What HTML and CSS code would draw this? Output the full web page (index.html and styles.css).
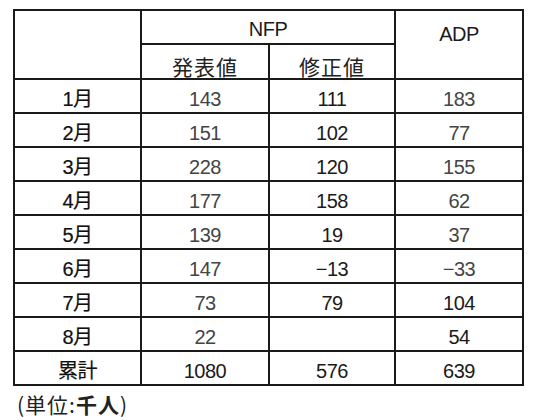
FILE: index.html
```html
<!DOCTYPE html>
<html lang="ja">
<head>
<meta charset="utf-8">
<link rel="stylesheet" href="styles.css">
</head>
<body>
<div class="page">
<table class="tbl">
  <colgroup>
    <col class="c-label"><col class="c-num"><col class="c-num2"><col class="c-num">
  </colgroup>
  <thead>
    <tr class="h1">
      <th rowspan="2" class="blank"></th>
      <th colspan="2" class="latin">NFP</th>
      <th rowspan="2" class="latin adp">ADP</th>
    </tr>
    <tr class="h2">
      <th class="jp">発表値</th>
      <th class="jp">修正値</th>
    </tr>
  </thead>
  <tbody>
    <tr><td class="lbl">1月</td><td class="lt">143</td><td>111</td><td class="lt">183</td></tr>
    <tr><td class="lbl">2月</td><td class="lt">151</td><td>102</td><td class="lt">77</td></tr>
    <tr><td class="lbl">3月</td><td class="lt">228</td><td>120</td><td class="lt">155</td></tr>
    <tr><td class="lbl">4月</td><td class="lt">177</td><td>158</td><td class="lt">62</td></tr>
    <tr><td class="lbl">5月</td><td class="lt">139</td><td>19</td><td class="lt">37</td></tr>
    <tr><td class="lbl">6月</td><td class="lt">147</td><td>−13</td><td class="lt">−33</td></tr>
    <tr><td class="lbl">7月</td><td class="lt">73</td><td>79</td><td>104</td></tr>
    <tr><td class="lbl">8月</td><td class="lt">22</td><td></td><td>54</td></tr>
    <tr><td class="lbl">累計</td><td>1080</td><td>576</td><td>639</td></tr>
  </tbody>
</table>
<p class="unit">(単位:<b>千人</b>)</p>
</div>
</body>
</html>
```
FILE: styles.css
```css
html, body {
  margin: 0;
  padding: 0;
  background: #ffffff;
}
.page {
  padding: 9px 0 0 13px;
  font-family: "Liberation Sans", "Noto Sans CJK JP", sans-serif;
  color: #1a1a1a;
}
.tbl {
  border-collapse: collapse;
  table-layout: fixed;
  width: 510px;
  border: 2px solid #111;
}
.c-label { width: 127px; }
.c-num { width: 128px; }
.c-num2 { width: 126px; }
.tbl th, .tbl td {
  border: 2px solid #1a1a1a;
  padding: 0 0 2px 0;
  text-align: center;
  vertical-align: bottom;
  font-weight: normal;
  font-size: 20px;
  line-height: 22px;
  letter-spacing: -0.5px;
}
.tbl tr { height: 34px; }
.tbl tr.h2 { height: 35px; }
.tbl th.latin { padding-bottom: 3px; }
.tbl th.adp {
  vertical-align: top;
  padding-top: 12px;
}
.tbl th.jp {
  font-family: "Noto Sans CJK JP", sans-serif;
  font-size: 21px;
  letter-spacing: 1px;
  line-height: 24px;
  padding-bottom: 0;
  color: #222;
}
.tbl td.lbl {
  font-weight: normal;
  color: #111;
  -webkit-text-stroke: 0.2px #111;
}
.tbl td.lt { color: #444; }
.unit {
  margin: 5px 0 0 4px;
  font-family: "Noto Sans CJK JP", sans-serif;
  font-size: 21px;
  letter-spacing: 1px;
  line-height: 26px;
  color: #222;
}
.unit b { font-weight: bold; }
```
